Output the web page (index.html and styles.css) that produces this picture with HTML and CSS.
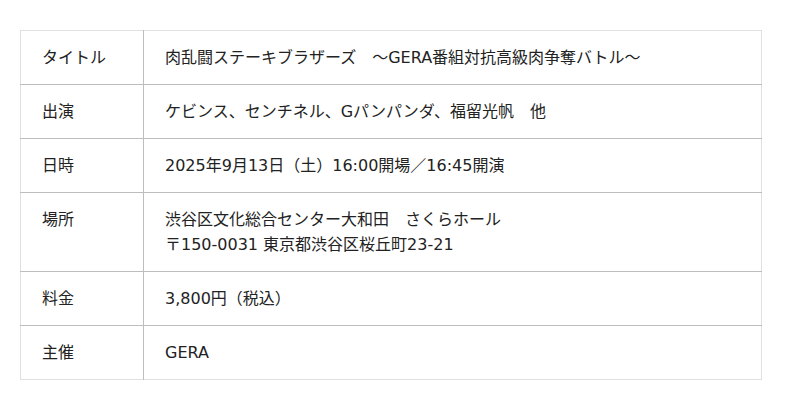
FILE: index.html
```html
<!DOCTYPE html>
<html lang="ja">
<head>
<meta charset="utf-8">
<link rel="stylesheet" href="styles.css">
</head>
<body>
<table class="info">
  <tr><th>タイトル</th><td>肉乱闘ステーキブラザーズ　～GERA番組対抗高級肉争奪バトル～</td></tr>
  <tr><th>出演</th><td>ケビンス、センチネル、Gパンパンダ、福留光帆　他</td></tr>
  <tr><th>日時</th><td>2025年9月13日（土）16:00開場／16:45開演</td></tr>
  <tr><th>場所</th><td>渋谷区文化総合センター大和田　さくらホール<br>〒150-0031 東京都渋谷区桜丘町23-21</td></tr>
  <tr><th>料金</th><td>3,800円（税込）</td></tr>
  <tr><th>主催</th><td>GERA</td></tr>
</table>
</body>
</html>
```
FILE: styles.css
```css
html, body {
  margin: 0;
  background: #fff;
}
body {
  padding: 30px 20px;
  font-family: "DejaVu Sans", "Noto Sans CJK JP", sans-serif;
  font-size: 16px;
  color: #222;
}
.info {
  width: 742px;
  border-collapse: collapse;
  border: 1px solid #e0e0e0;
}
.info th,
.info td {
  text-align: left;
  font-weight: normal;
  padding: 14px 21px 14px 21px;
  line-height: 25px;
  vertical-align: top;
}
.info th {
  width: 80px;
  border-right: 1px solid #bdbdbd;
}
.info tr + tr th,
.info tr + tr td {
  border-top: 1px solid #bdbdbd;
}
```
